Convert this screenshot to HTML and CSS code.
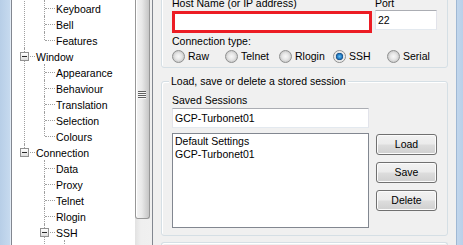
FILE: index.html
```html
<!DOCTYPE html>
<html lang="en">
<head>
  <meta charset="UTF-8">
  <title>PuTTY Configuration</title>
  <link rel="stylesheet" href="styles.css">
</head>
<body>

<div class="frame-left"></div>

<!-- CATEGORY TREE -->
<div class="tree-panel">
  <div class="tree-view">
    <ul class="tree">
      <li class="cut">
        <div class="node"><span class="exp"></span>Terminal</div>
        <ul>
          <li><div class="node">Keyboard</div></li>
          <li><div class="node">Bell</div></li>
          <li><div class="node">Features</div></li>
        </ul>
      </li>
      <li>
        <div class="node"><span class="exp"></span>Window</div>
        <ul>
          <li><div class="node">Appearance</div></li>
          <li><div class="node">Behaviour</div></li>
          <li><div class="node">Translation</div></li>
          <li><div class="node">Selection</div></li>
          <li><div class="node">Colours</div></li>
        </ul>
      </li>
      <li>
        <div class="node"><span class="exp"></span>Connection</div>
        <ul>
          <li><div class="node">Data</div></li>
          <li><div class="node">Proxy</div></li>
          <li><div class="node">Telnet</div></li>
          <li><div class="node">Rlogin</div></li>
          <li>
            <div class="node"><span class="exp"></span>SSH</div>
            <ul>
              <li><div class="node">Kex</div></li>
              <li><div class="node">Host keys</div></li>
            </ul>
          </li>
          <li><div class="node">Serial</div></li>
        </ul>
      </li>
    </ul>
  </div>
  <div class="scrollbar">
    <div class="thumb"><span class="grip"></span></div>
  </div>
</div>

<!-- SESSION PANEL -->
<div class="main">
  <div class="group group-top">
    <div class="host-grid">
      <span>Host Name (or IP address)</span>
      <span>Port</span>
      <div class="host-box"></div>
      <div class="textbox port">22</div>
    </div>
    <div class="conn-label">Connection type:</div>
    <div class="radios">
      <label class="radio-item"><span class="radio"></span>Raw</label>
      <label class="radio-item"><span class="radio"></span>Telnet</label>
      <label class="radio-item"><span class="radio"></span>Rlogin</label>
      <label class="radio-item"><span class="radio checked"></span>SSH</label>
      <label class="radio-item"><span class="radio"></span>Serial</label>
    </div>
  </div>

  <fieldset class="group sessions">
    <legend>Load, save or delete a stored session</legend>
    <div class="saved-label">Saved Sessions</div>
    <div class="textbox saved-name">GCP-Turbonet01</div>
    <div class="session-row">
      <div class="listbox">
        <div>Default Settings</div>
        <div>GCP-Turbonet01</div>
      </div>
      <div class="buttons">
        <button>Load</button>
        <button>Save</button>
        <button>Delete</button>
      </div>
    </div>
  </fieldset>

  <div class="group group-next"></div>
</div>

<div class="frame-right"></div>

</body>
</html>
```

FILE: styles.css
```css
* { box-sizing: border-box; }

body {
  margin: 0;
  width: 463px;
  height: 245px;
  overflow: hidden;
  display: flex;
  background: #f0f0f0;
  font-family: "Liberation Sans", Arial, sans-serif;
  font-size: 10.5px;
  color: #000;
}

/* window frame edges */
.frame-left {
  width: 11px;
  flex: none;
  background: linear-gradient(90deg, #b7cee7, #c6daef);
  border-right: 1px solid #e2ebf5;
}
.frame-right {
  width: 7px;
  flex: none;
  background: linear-gradient(90deg, #c1d6ec, #b9d0e9);
  border-left: 1px solid #9fb8d4;
}

/* tree */
.tree-panel {
  width: 142px;
  flex: none;
  display: flex;
  background: #fff;
  border-left: 1px solid #828790;
  border-right: 1px solid #828790;
}
.tree-view {
  width: 123px;
  overflow: hidden;
}
.tree, .tree ul {
  list-style: none;
  margin: 0;
  padding: 0;
}
.tree { margin-top: -16px; }
.tree ul { padding-left: 20px; }
.tree li { position: relative; }
.tree li::before {
  content: "";
  position: absolute;
  left: 12px;
  top: 0;
  bottom: 0;
  border-left: 1px dotted #a0a0a0;
}
.tree li:last-child::before {
  bottom: auto;
  height: 8px;
}
.node {
  position: relative;
  height: 16px;
  line-height: 16px;
  padding: 1px 0 0 24px;
  white-space: nowrap;
}
.node::before {
  content: "";
  position: absolute;
  left: 13px;
  top: 8px;
  width: 10px;
  border-top: 1px dotted #a0a0a0;
}
.exp {
  position: absolute;
  left: 8px;
  top: 4px;
  width: 9px;
  height: 9px;
  border: 1px solid #919191;
  background: linear-gradient(#ffffff, #dedede);
  z-index: 1;
}
.exp::after {
  content: "";
  position: absolute;
  left: 1px;
  top: 3px;
  width: 5px;
  height: 1px;
  background: #2a2a2a;
}

.scrollbar {
  width: 17px;
  background: linear-gradient(90deg, #e2e2e2, #efefef 35%, #f0f0f0);
}
.thumb {
  width: 15px;
  height: 219px;
  border: 1px solid #979797;
  border-top: 0;
  border-radius: 0 0 3px 3px;
  background: linear-gradient(90deg, #f4f4f4, #e9e9e9 45%, #d5d5d5 75%, #c6c6c6);
  box-shadow: inset 1px 0 0 #fff;
  padding-top: 91px;
}
.grip {
  display: block;
  width: 8px;
  height: 8px;
  margin-left: 2px;
  background: repeating-linear-gradient(#5f5f5f 0 1px, #f6f6f6 1px 2px);
}

/* right side */
.main {
  width: 303px;
  flex: none;
  display: flex;
  flex-direction: column;
  padding: 0 8px;
}
.group {
  border: 1px solid #d5dfe5;
  border-radius: 3px;
  box-shadow: inset 1px 1px 0 #fff;
}
.group-top {
  margin-top: -10px;
  padding: 6px 0 4px 10px;
  line-height: 13px;
}
.host-grid {
  display: grid;
  grid-template-columns: 203px 62px;
  align-items: start;
}
.host-box {
  margin-top: 1px;
  width: 200px;
  height: 22px;
  border: 3px solid #ec1c24;
  background: #fff;
}
.textbox {
  background: #fff;
  border: 1px solid;
  border-color: #abadb3 #e2e3ea #e3e9ef #e2e3ea;
  padding: 0 2px;
  line-height: 18px;
}
.port {
  width: 62px;
  height: 20px;
}
.conn-label { margin-top: 2px; }
.radios {
  display: grid;
  grid-template-columns: 53px 54px 54px 54px auto;
  margin-top: 2px;
  height: 13px;
}
.radio-item {
  display: flex;
  align-items: center;
  gap: 3px;
}
.radio {
  width: 13px;
  height: 13px;
  border-radius: 50%;
  border: 1px solid #8e8f8f;
  background: radial-gradient(circle, #f7f7f7 0, #e8e8e8 3px, #cdcdcd 5.5px);
}
.radio.checked {
  background: radial-gradient(circle, #66c0f5 0, #2c86cc 2px, #16508a 3.4px, #e2e2e2 4px, #f2f2f2 5.5px);
}

.sessions {
  margin: 7px 0 0;
  padding: 0 0 7px 10px;
  min-width: 0;
  line-height: 13px;
}
.sessions legend {
  margin-left: -3px;
  padding: 0 2px;
  line-height: 13px;
  background: #f0f0f0;
  position: relative;
}
.saved-label { margin-top: 6px; }
.saved-name {
  margin-top: 1px;
  width: 197px;
  height: 20px;
}
.session-row {
  display: flex;
  margin-top: 5px;
}
.listbox {
  width: 197px;
  height: 95px;
  background: #fff;
  border: 1px solid #828790;
  padding: 1px 2px;
  line-height: 12.5px;
}
.buttons {
  display: flex;
  flex-direction: column;
  gap: 7px;
  margin: 1px 0 0 7px;
}
.buttons button {
  width: 61px;
  height: 21px;
  padding: 0;
  font: inherit;
  color: #000;
  border: 1px solid #707070;
  border-radius: 3px;
  background: linear-gradient(#f2f2f2 0%, #ebebeb 48%, #dddddd 52%, #cfcfcf 100%);
  box-shadow: inset 0 0 0 1px #fbfbfb;
}

.group-next {
  margin-top: 6px;
  flex: 1;
  border-bottom: 0;
  border-radius: 3px 3px 0 0;
}
```
